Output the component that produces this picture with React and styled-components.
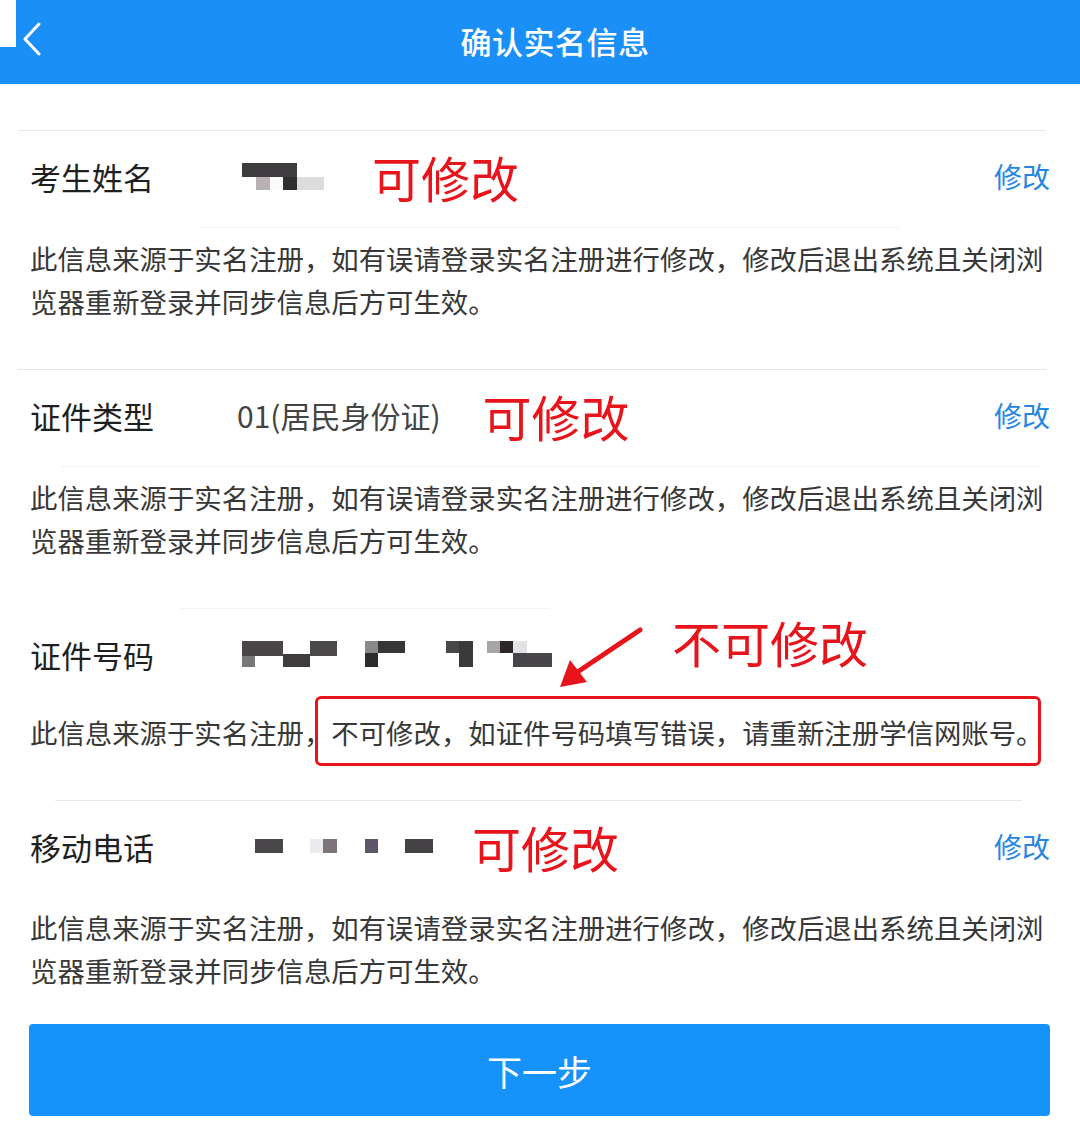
import styled, { createGlobalStyle } from 'styled-components'

const GlobalStyle = createGlobalStyle`
  body {
    margin: 0;
    background: #fff;
    font-family: "Noto Sans CJK SC", "Noto Sans", sans-serif;
  }
`

const Page = styled.div`
  width: 1080px;
  min-height: 1125px;
  background: #fff;
`

const Header = styled.header`
  position: relative;
  height: 84px;
  background: #1a8ff7;
  display: flex;
  align-items: center;
  justify-content: center;
  padding: 0 0 4px 30px;
  box-sizing: border-box;

  &::before {
    content: '';
    position: absolute;
    left: 0;
    top: 0;
    width: 16px;
    height: 47px;
    background: #fff;
  }
`

const Back = styled.svg`
  position: absolute;
  left: 22px;
  top: 22px;
`

const Title = styled.h1`
  margin: 0;
  color: #fff;
  font-size: 31px;
  font-weight: 500;
  letter-spacing: 0.5px;
`

const Content = styled.main`
  padding-top: 46px;
`

const Rule = styled.div`
  height: 1px;
  margin: ${p => p.$inset || '0 34px 0 18px'};
  background: ${p => p.$faint ? '#f3f3f3' : '#e8e8e8'};
`

const Row = styled.div`
  position: relative;
  height: 96px;
  box-sizing: border-box;
  display: flex;
  align-items: center;
  padding: 0 30px 6px;
`

const Label = styled.span`
  width: 207px;
  flex-shrink: 0;
  font-size: 31px;
  color: #1f1f1f;
`

const Value = styled.span`
  font-size: 30px;
  color: #444;
`

const Mosaic = styled.svg`
  display: block;
  margin-left: ${p => p.$indent || 0}px;
  filter: blur(0.6px);
`

const Mark = styled.span`
  margin-left: ${p => p.$gap}px;
  font-size: 49px;
  color: #e8141b;
  line-height: 1;
  transform: translateY(${p => p.$lift ? -p.$lift : 0}px);
`

const Edit = styled.span`
  margin-left: auto;
  font-size: 28px;
  color: #2586e2;
`

const Note = styled.p`
  margin: 0;
  padding: ${p => p.$top ?? 9}px 30px ${p => p.$bottom ?? 46}px;
  font-size: 27.4px;
  line-height: 43px;
  color: #383838;
`

const Boxed = styled.span`
  position: relative;

  &::after {
    content: '';
    position: absolute;
    left: -16px;
    right: 2px;
    top: -16px;
    bottom: -14px;
    border: 3px solid #e8141b;
    border-radius: 6px;
  }
`

const Arrow = styled.svg`
  position: absolute;
  left: 555px;
  top: 16px;
`

const Next = styled.button`
  display: block;
  width: 1021px;
  height: 92px;
  margin: 0 0 0 29px;
  border: none;
  border-radius: 4px;
  background: #1593fb;
  color: #fff;
  font-family: inherit;
  font-size: 35px;
`

const NOTE = '此信息来源于实名注册，如有误请登录实名注册进行修改，修改后退出系统且关闭浏览器重新登录并同步信息后方可生效。'

// redacted values: [x, y, w, h, fill]
const nameCells = [
  [0, 0, 55, 14, '#3e3c3e'],
  [14, 14, 14, 13, '#b9b0b3'],
  [28, 14, 13, 13, '#fafafa'],
  [41, 14, 14, 13, '#2f2e31'],
  [55, 14, 27, 13, '#dcdcdc'],
]

const idCells = [
  [0, 0, 41, 15, '#4a4648'],
  [0, 15, 13, 11, '#7a7778'],
  [41, 13, 27, 13, '#3f3c3e'],
  [68, 0, 27, 15, '#4b484a'],
  [123, 0, 13, 12, '#8a8889'],
  [136, 0, 27, 12, '#383536'],
  [123, 12, 13, 14, '#2e2b2c'],
  [204, 0, 13, 12, '#49464a'],
  [217, 0, 14, 26, '#3c393b'],
  [245, 0, 13, 12, '#a8a5a7'],
  [258, 0, 13, 12, '#2d2628'],
  [271, 0, 14, 12, '#e2e1e3'],
  [271, 12, 39, 14, '#47444a'],
]

const phoneCells = [
  [0, 0, 28, 14, '#4a474b'],
  [55, 0, 13, 14, '#eceaee'],
  [68, 0, 14, 14, '#7d7479'],
  [110, 0, 13, 14, '#5c5668'],
  [150, 0, 28, 14, '#454246'],
]

const Redacted = ({ cells, width, height, indent }) => (
  <Mosaic width={width} height={height} viewBox={`0 0 ${width} ${height}`} $indent={indent}>
    {cells.map(([x, y, w, h, fill], i) => (
      <rect key={i} x={x} y={y} width={w} height={h} fill={fill} />
    ))}
  </Mosaic>
)

const App = () => {
  return (
    <Page>
      <GlobalStyle />
      <Header>
        <Back width="20" height="34" viewBox="0 0 20 34">
          <path d="M17 2 L3 17 L17 32" fill="none" stroke="#fff" strokeWidth="3" strokeLinecap="round" strokeLinejoin="round" />
        </Back>
        <Title>确认实名信息</Title>
      </Header>

      <Content>
        <Rule />
        <Row>
          <Label>考生姓名</Label>
          <Redacted cells={nameCells} width={82} height={27} indent={5} />
          <Mark $gap={48}>可修改</Mark>
          <Edit>修改</Edit>
        </Row>
        <Rule $faint $inset="0 180px 0 200px" />
        <Note>{NOTE}</Note>

        <Rule />
        <Row>
          <Label>证件类型</Label>
          <Value>01(居民身份证)</Value>
          <Mark $gap={42}>可修改</Mark>
          <Edit>修改</Edit>
        </Row>
        <Rule $faint $inset="0 40px 0 60px" />
        <Note>{NOTE}</Note>

        <Rule $faint $inset="0 530px 0 180px" />
        <Row>
          <Label>证件号码</Label>
          <Redacted cells={idCells} width={310} height={26} indent={5} />
          <Arrow width="90" height="72" viewBox="0 0 90 72">
            <line x1="85" y1="5" x2="24" y2="46" stroke="#e8141b" strokeWidth="5" strokeLinecap="round" />
            <polygon points="5,62 15,35 32,57" fill="#e8141b" />
          </Arrow>
          <Mark $gap={120} $lift={13}>不可修改</Mark>
        </Row>
        <Note $top={6}>
          此信息来源于实名注册，<Boxed>不可修改，如证件号码填写错误，请重新注册学信网账号。</Boxed>
        </Note>

        <Rule $inset="0 58px 0 55px" />
        <Row>
          <Label>移动电话</Label>
          <Redacted cells={phoneCells} width={178} height={14} indent={18} />
          <Mark $gap={39}>可修改</Mark>
          <Edit>修改</Edit>
        </Row>
        <Note $bottom={32}>{NOTE}</Note>

        <Next>下一步</Next>
      </Content>
    </Page>
  )
}

export default App
